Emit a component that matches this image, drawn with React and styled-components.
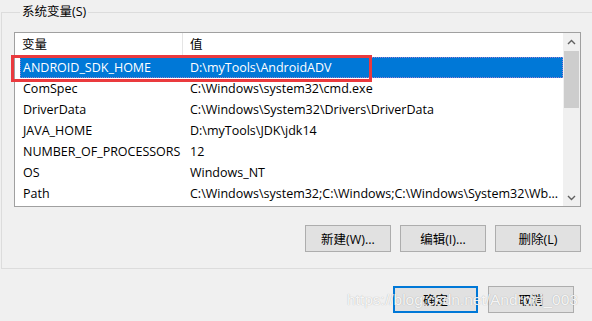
import React from "react";
import styled, { createGlobalStyle } from "styled-components";

const Global = createGlobalStyle`
  html, body { margin: 0; padding: 0; background: #f0f0f0; }
  body {
    width: 592px; height: 321px; overflow: hidden;
    font-family: "Open Sans", "Noto Sans CJK SC", sans-serif;
    font-size: 12.5px; color: #000;
  }
`;

const Page = styled.div`
  position: relative;
  width: 592px;
  height: 321px;
  display: flex;
  flex-direction: column;
`;

const Group = styled.fieldset`
  margin: 4px -10px 0 1px;
  padding: 0 26px 16px 12px;
  border: 1px solid #dcdcdc;
  min-width: 0;
  display: flex;
  flex-direction: column;
`;

const Legend = styled.legend`
  margin-left: 6px;
  padding: 0 2px;
  line-height: 16px;
  font-size: 12.5px;
`;

const ListBox = styled.div`
  position: relative;
  margin-top: 12px;
  width: 565px;
  height: 173px;
  border: 1px solid #a0a0a0;
  background: #fff;
  display: flex;
`;

const ListContent = styled.div`
  flex: 1;
  display: flex;
  flex-direction: column;
  overflow: hidden;
`;

const Header = styled.div`
  display: grid;
  grid-template-columns: 168px 1fr;
  height: 23px;
  align-items: stretch;
  margin-bottom: 1px;
`;

const HeadCell = styled.div`
  display: flex;
  align-items: center;
  padding: 0 0 3px 7px;
  border-right: ${(p) => (p.$first ? "1px solid #e5e5e5" : "none")};
`;

const Row = styled.div`
  display: grid;
  grid-template-columns: 163px 1fr;
  height: 21px;
  margin-left: 5px;
  align-items: center;
  background: ${(p) => (p.$selected ? "#0078d7" : "transparent")};
  color: ${(p) => (p.$selected ? "#fff" : "#000")};
  outline: ${(p) => (p.$selected ? "1px dotted #9a7fd0" : "none")};
  outline-offset: -1px;
  white-space: nowrap;
`;

const Cell = styled.div`
  padding-left: ${(p) => (p.$first ? 3 : 7)}px;
  overflow: hidden;
  text-overflow: ellipsis;
`;

const ScrollBar = styled.div`
  width: 17px;
  background: #f0f0f0;
  display: flex;
  flex-direction: column;
`;

const Arrow = styled.div`
  height: 17px;
  display: flex;
  align-items: center;
  justify-content: center;
`;

const Track = styled.div`
  flex: 1;
  display: flex;
  flex-direction: column;
`;

const Thumb = styled.div`
  margin: 1px 1px 0 1px;
  height: 57px;
  background: #cdcdcd;
`;

const Highlight = styled.div`
  position: absolute;
  left: -4px;
  top: 22px;
  width: 361px;
  height: 27px;
  box-sizing: border-box;
  border: 3px solid #ea3a3e;
  pointer-events: none;
`;

const ButtonRow = styled.div`
  display: flex;
  justify-content: flex-end;
  gap: 9px;
  margin-top: 18px;
  width: 567px;
`;

const Button = styled.button`
  box-sizing: border-box;
  width: ${(p) => p.$w || 86}px;
  height: 27px;
  background: #e1e1e1;
  border: ${(p) => (p.$default ? "2px solid #0078d7" : "1px solid #adadad")};
  font-family: "Open Sans", "Noto Sans CJK SC", sans-serif;
  font-size: 12.5px;
  color: #000;
  padding: 0;
  border-radius: 0;
`;

const Footer = styled.div`
  display: flex;
  justify-content: flex-end;
  gap: 10px;
  padding: 17px 18px 0 0;
`;

const Watermark = styled.div`
  position: absolute;
  left: 347px;
  top: 291px;
  font-family: "Liberation Sans", Arial, sans-serif;
  font-size: 15.5px;
  color: rgba(255, 255, 255, 0.9);
  text-shadow: 0 0 1px rgba(0, 0, 0, 0.3);
  white-space: nowrap;
  pointer-events: none;
`;

const Chevron = ({ up }) => (
  <svg width="9" height="6" viewBox="0 0 9 6">
    <path
      d={up ? "M1 5 L4.5 1.5 L8 5" : "M1 1 L4.5 4.5 L8 1"}
      fill="none"
      stroke="#606060"
      strokeWidth="1.4"
    />
  </svg>
);

const rows = [
  ["ANDROID_SDK_HOME", "D:\\myTools\\AndroidADV"],
  ["ComSpec", "C:\\Windows\\system32\\cmd.exe"],
  ["DriverData", "C:\\Windows\\System32\\Drivers\\DriverData"],
  ["JAVA_HOME", "D:\\myTools\\JDK\\jdk14"],
  ["NUMBER_OF_PROCESSORS", "12"],
  ["OS", "Windows_NT"],
  ["Path", "C:\\Windows\\system32;C:\\Windows;C:\\Windows\\System32\\Wb..."],
];

export default function App() {
  return (
    <Page>
      <Global />
      <Group>
        <Legend>系统变量(S)</Legend>
        <ListBox>
          <ListContent>
            <Header>
              <HeadCell $first>变量</HeadCell>
              <HeadCell>值</HeadCell>
            </Header>
            {rows.map(([k, v], i) => (
              <Row key={k} $selected={i === 0}>
                <Cell $first>{k}</Cell>
                <Cell>{v}</Cell>
              </Row>
            ))}
          </ListContent>
          <ScrollBar>
            <Arrow><Chevron up /></Arrow>
            <Track><Thumb /></Track>
            <Arrow><Chevron /></Arrow>
          </ScrollBar>
          <Highlight />
        </ListBox>
        <ButtonRow>
          <Button>新建(W)...</Button>
          <Button>编辑(I)...</Button>
          <Button>删除(L)</Button>
        </ButtonRow>
      </Group>
      <Footer>
        <Button $default $w={85}>确定</Button>
        <Button $w={86}>取消</Button>
      </Footer>
      <Watermark>https://blog.csdn.net/Android_003</Watermark>
    </Page>
  );
}
